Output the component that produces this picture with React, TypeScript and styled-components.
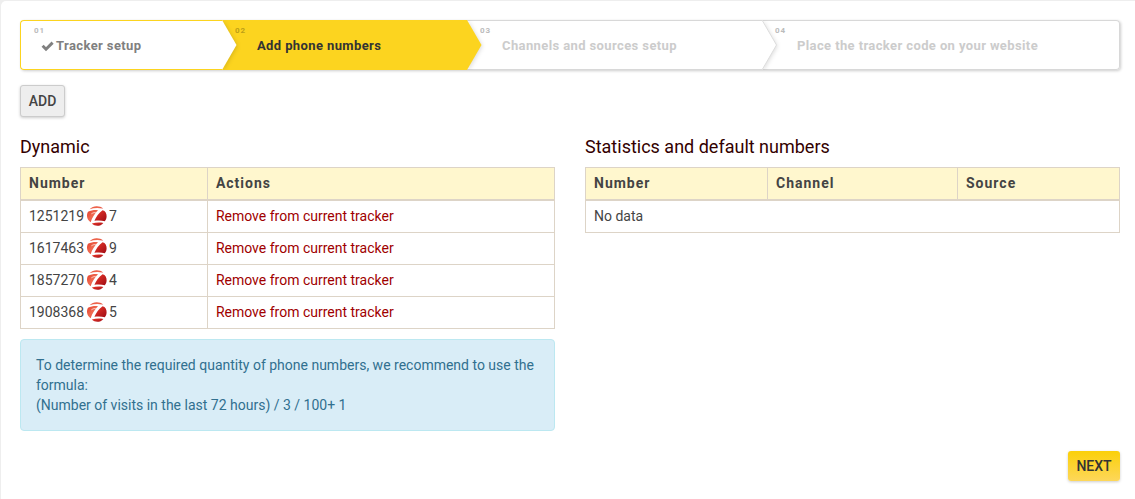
import React from 'react';
import styled, { createGlobalStyle, css } from 'styled-components';

const GlobalStyle = createGlobalStyle`
  *, *::before, *::after { box-sizing: border-box; }
  body {
    margin: 0;
    background: #eeeeee;
    color: #444444;
    font: 14px/20px Roboto, "Liberation Sans", sans-serif;
  }
`;

const Card = styled.main`
  margin: 1px 0 0 1px;
  padding: 19px 15px 18px 19px;
  min-height: calc(100vh - 1px);
  background: #ffffff;
  border-radius: 5px 0 0 0;
`;

type StepState = 'done' | 'active' | 'pending';

const Wizard = styled.ol`
  display: flex;
  height: 50px;
  margin: 0 0 15px;
  padding: 0;
  list-style: none;
  border-radius: 4px;
  box-shadow: 1px 1px 3px rgba(0, 0, 0, 0.2);
`;

const stepLook = {
  done: css`
    background: #ffffff;
    border-color: #fcd41f;
    color: #808080;
  `,
  active: css`
    background: #fcd41f;
    border-color: #fcd41f;
    color: #333333;
  `,
  pending: css`
    background: #ffffff;
    border-color: #d8d8d8;
    color: #cccccc;
  `,
};

const Step = styled.li<{ $state: StepState; $width?: number }>`
  position: relative;
  flex: ${({ $width }) => ($width ? `0 0 ${$width}px` : '1')};
  padding: 5px 0 0 12px;
  border-width: 1px 0;
  border-style: solid;
  ${({ $state }) => stepLook[$state]}

  &:first-child {
    border-left-width: 1px;
    border-radius: 4px 0 0 4px;
  }
  &:last-child {
    border-right-width: 1px;
    border-radius: 0 4px 4px 0;
  }
`;

const StepNumber = styled.div<{ $state: StepState }>`
  padding-left: 1px;
  color: ${({ $state }) => ($state === 'active' ? '#bd9f17' : '#bbbbbb')};
  font-size: 8px;
  font-weight: 700;
  line-height: 10px;
  letter-spacing: 1px;
`;

const StepTitle = styled.div<{ $state: StepState }>`
  display: flex;
  align-items: center;
  gap: 2px;
  padding-left: ${({ $state }) => ($state === 'done' ? 8 : 23)}px;
  font-size: 13px;
  font-weight: 700;
  line-height: 20px;
  letter-spacing: 0.03em;
  white-space: nowrap;
`;

const Arrow = styled.svg`
  position: absolute;
  z-index: 1;
  top: -1px;
  left: 100%;
  width: 20px;
  height: 50px;
`;

function StepArrow({ state }: { state: StepState }) {
  const fill = state === 'active' ? '#fcd41f' : '#ffffff';
  return (
    <Arrow viewBox="0 0 20 50" aria-hidden="true">
      <path
        d="M-1 0H0L14.5 25L0 50H-1Z"
        fill={fill}
        style={{ filter: 'drop-shadow(1px 1px 2px rgba(0,0,0,.14))' }}
      />
      {state === 'pending' && <path d="M0 0L14.5 25L0 50" fill="none" stroke="#dddddd" />}
    </Arrow>
  );
}

function CheckIcon() {
  return (
    <svg width="13" height="12" viewBox="0 0 13 12" aria-hidden="true">
      <path d="M1.6 5.8L5 9.2L11.6 2.6" fill="none" stroke="#808080" strokeWidth="3" />
    </svg>
  );
}

const Button = styled.button<{ $primary?: boolean }>`
  display: block;
  min-width: ${({ $primary }) => ($primary ? 52 : 45)}px;
  height: ${({ $primary }) => ($primary ? 30 : 32)}px;
  padding: 0 7px;
  border: ${({ $primary }) => ($primary ? '0' : '1px solid #cccccc')};
  border-radius: 3px;
  background: ${({ $primary }) =>
    $primary ? 'linear-gradient(#fbd009, #fdd75a)' : '#eeeeee'};
  box-shadow: 0 1px 3px rgba(0, 0, 0, 0.2);
  color: ${({ $primary }) => ($primary ? '#333333' : '#444444')};
  font: 500 14px/20px Roboto, "Liberation Sans", sans-serif;
  cursor: pointer;
`;

const Columns = styled.div`
  display: grid;
  grid-template-columns: 1fr 1fr;
  gap: 30px;
  margin: 20px 0;
`;

const Heading = styled.h2`
  margin: 0 0 10px;
  color: #330000;
  font-size: 18px;
  font-weight: 400;
  line-height: 20px;
`;

const Table = styled.table`
  width: 100%;
  border-collapse: collapse;
  table-layout: fixed;
`;

const Th = styled.th<{ $width?: string }>`
  width: ${({ $width }) => $width ?? 'auto'};
  padding: 5px 8px 6px;
  border: 1px solid #ddd4c7;
  border-bottom-width: 2px;
  background: #fff7ce;
  text-align: left;
  font-weight: 700;
  letter-spacing: 1px;
`;

const Td = styled.td`
  padding: 5px 8px 6px;
  border: 1px solid #ddd4c7;
`;

const PhoneNumber = styled.span`
  display: flex;
  align-items: center;
  gap: 1px;
  height: 20px;
`;

const Link = styled.a`
  color: #a00000;
  text-decoration: none;
`;

const Note = styled.p`
  margin: 10px 0 0;
  padding: 15px;
  border: 1px solid #bce8f1;
  border-radius: 4px;
  background: #d9edf7;
  color: #31708f;
`;

const Footer = styled.footer`
  display: flex;
  justify-content: flex-end;
`;

function CallMark() {
  return (
    <svg width="23" height="22" viewBox="0 0 23 22" aria-hidden="true">
      <defs>
        <linearGradient id="mark-light" x1="0" y1="0" x2="1" y2="1">
          <stop offset="0" stopColor="#e2402c" />
          <stop offset="0.5" stopColor="#f06a50" />
          <stop offset="1" stopColor="#d8281e" />
        </linearGradient>
        <linearGradient id="mark-dark" x1="0" y1="0" x2="1" y2="1">
          <stop offset="0" stopColor="#ee3a2c" />
          <stop offset="1" stopColor="#a00c14" />
        </linearGradient>
      </defs>
      <path d="M4.6 4.2C8 0.6 14.5 0.2 18.2 3.6C13.5 2.6 9 2.8 4.6 4.2Z" fill="url(#mark-light)" />
      <path
        d="M3 6.8C6 5.4 9.4 4.9 13 5.2C9.8 8.4 7.2 12.4 5.6 17.2C1.9 14.6 1.1 10.4 3 6.8Z"
        fill="url(#mark-light)"
      />
      <path
        d="M6.4 8.8C8 7.8 9.2 7.5 10.6 7.5"
        fill="none"
        stroke="#ffffff"
        strokeWidth="1"
        opacity="0.7"
      />
      <path
        d="M17.6 5.2C20.4 5.8 21.8 8.6 21.6 11.4C21.5 13.4 20.8 15 19.8 16.2C16.4 15.2 12.8 15.2 9.4 15.8C11 11.8 13.8 8 17.6 5.2Z"
        fill="url(#mark-dark)"
      />
      <path d="M6.8 18.6C10.6 17.4 14.8 17.3 18.4 18C15.2 21.6 10.2 21.8 6.8 18.6Z" fill="url(#mark-dark)" />
    </svg>
  );
}

const steps: { number: string; title: string; state: StepState; width?: number }[] = [
  { number: '01', title: 'Tracker setup', state: 'done', width: 202 },
  { number: '02', title: 'Add phone numbers', state: 'active', width: 245 },
  { number: '03', title: 'Channels and sources setup', state: 'pending', width: 295 },
  { number: '04', title: 'Place the tracker code on your website', state: 'pending' },
];

const phones = [
  ['1251219', '7'],
  ['1617463', '9'],
  ['1857270', '4'],
  ['1908368', '5'],
];

export default function App() {
  return (
    <>
      <GlobalStyle />
      <Card>
        <Wizard>
          {steps.map(({ number, title, state, width }, index) => (
            <Step key={number} $state={state} $width={width}>
              <StepNumber $state={state}>{number}</StepNumber>
              <StepTitle $state={state}>
                {state === 'done' && <CheckIcon />}
                {title}
              </StepTitle>
              {index < steps.length - 1 && <StepArrow state={state} />}
            </Step>
          ))}
        </Wizard>
        <Button type="button">ADD</Button>
        <Columns>
          <section>
            <Heading>Dynamic</Heading>
            <Table>
              <thead>
                <tr>
                  <Th $width="35%">Number</Th>
                  <Th>Actions</Th>
                </tr>
              </thead>
              <tbody>
                {phones.map(([start, end]) => (
                  <tr key={start}>
                    <Td>
                      <PhoneNumber>
                        {start}
                        <CallMark />
                        {end}
                      </PhoneNumber>
                    </Td>
                    <Td>
                      <Link href="#remove">Remove from current tracker</Link>
                    </Td>
                  </tr>
                ))}
              </tbody>
            </Table>
            <Note>
              To determine the required quantity of phone numbers, we recommend to use the formula:
              <br />
              (Number of visits in the last 72 hours) / 3 / 100+ 1
            </Note>
          </section>
          <section>
            <Heading>Statistics and default numbers</Heading>
            <Table>
              <thead>
                <tr>
                  <Th $width="182px">Number</Th>
                  <Th $width="190px">Channel</Th>
                  <Th>Source</Th>
                </tr>
              </thead>
              <tbody>
                <tr>
                  <Td colSpan={3}>No data</Td>
                </tr>
              </tbody>
            </Table>
          </section>
        </Columns>
        <Footer>
          <Button type="button" $primary>
            NEXT
          </Button>
        </Footer>
      </Card>
    </>
  );
}
